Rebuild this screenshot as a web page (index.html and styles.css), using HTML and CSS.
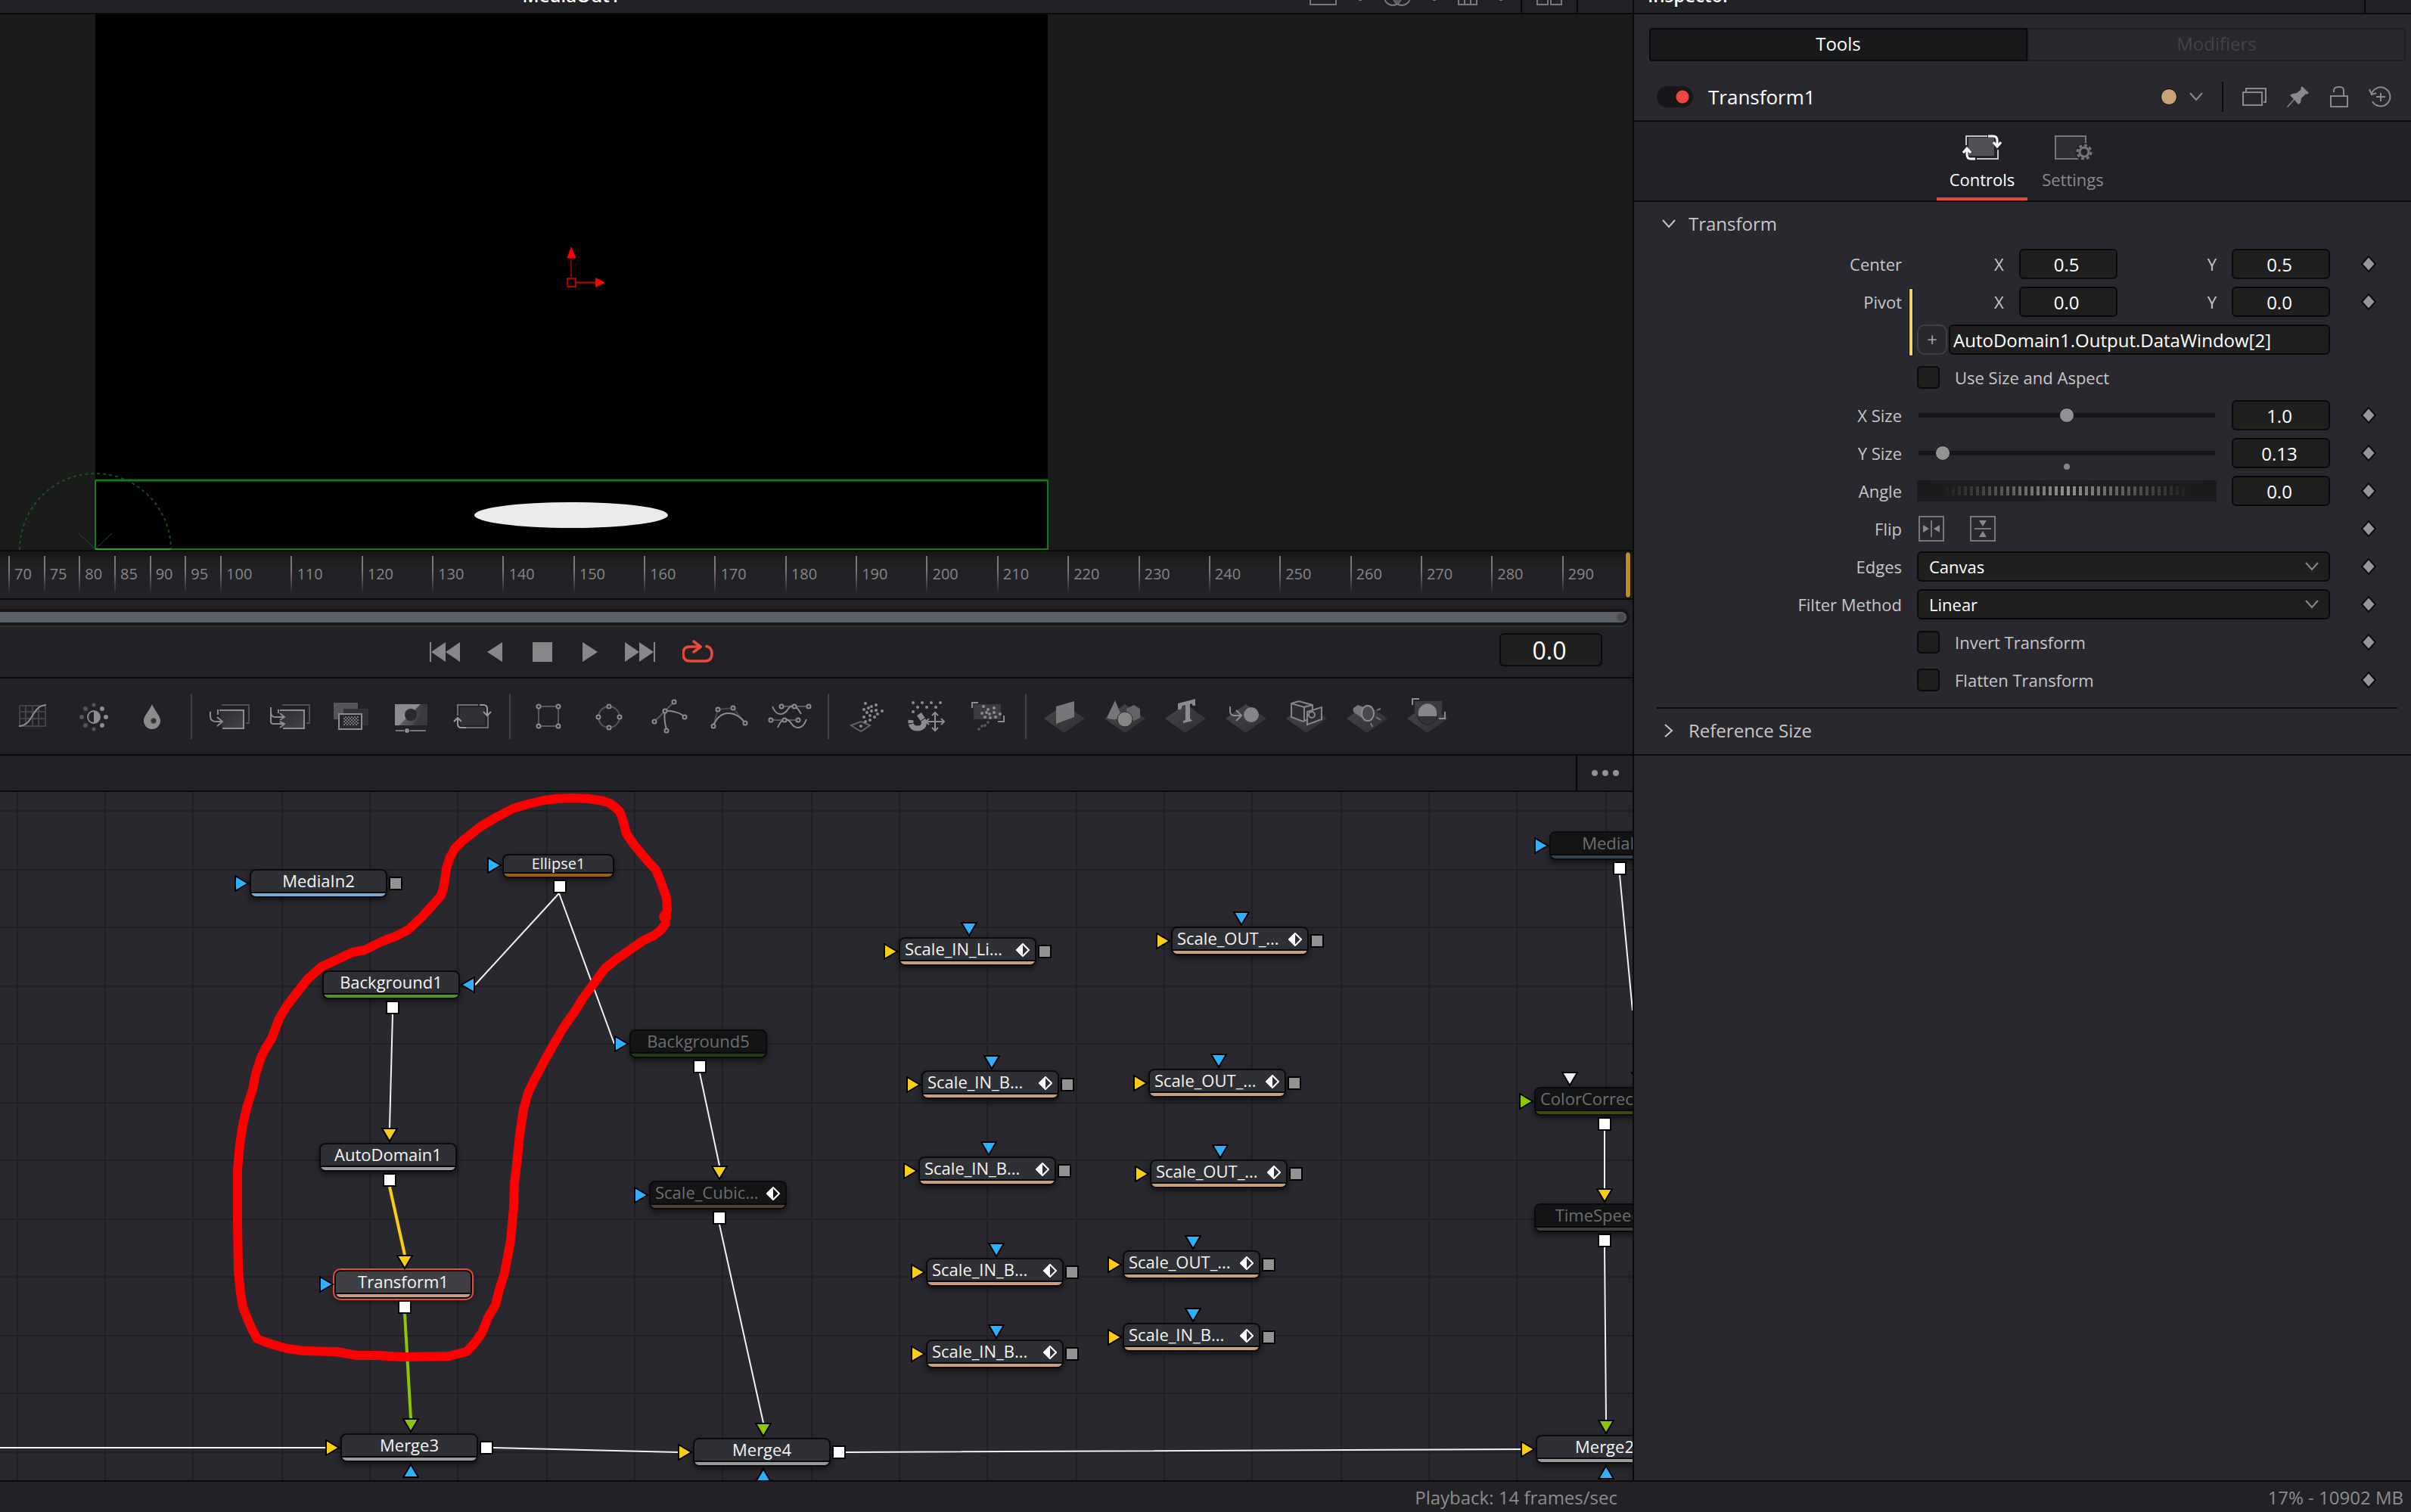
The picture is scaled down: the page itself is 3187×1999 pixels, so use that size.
FILE: index.html
```
<!DOCTYPE html>
<html lang="en">
<head>
<meta charset="utf-8">
<title>Fusion – MediaOut1</title>
<link rel="stylesheet" href="styles.css">
</head>
<body>
<svg class="sprite" aria-hidden="true">
  <defs>
    <symbol id="tri-r" viewBox="0 0 20 22"><path d="M1 1L18 11L1 21Z"/></symbol>
    <symbol id="tri-l" viewBox="0 0 20 22"><path d="M19 1L2 11L19 21Z"/></symbol>
    <symbol id="tri-d" viewBox="0 0 22 20"><path d="M1 1H21L11 18Z"/></symbol>
    <symbol id="tri-u" viewBox="0 0 22 20"><path d="M1 19H21L11 2Z"/></symbol>
    <symbol id="keyed" viewBox="0 0 18 18"><path d="M9 1L17 9L9 17L1 9Z" fill="none" stroke="#fff" stroke-width="2"/><path d="M9 0V18L0 9Z" fill="#fff"/></symbol>
    <symbol id="key" viewBox="0 0 22 24"><path d="M11 2L20 12L11 22L2 12Z" fill="#97979b" stroke="#0c0c0d" stroke-width="2"/></symbol>
    <symbol id="chev" viewBox="0 0 20 14"><path d="M2 2L10 11L18 2" fill="none" stroke="currentColor" stroke-width="2"/></symbol>
    <linearGradient id="base" x1="0" y1="0" x2="1" y2="1"><stop offset="0" stop-color="#48484b"/><stop offset="1" stop-color="#2e2e32"/></linearGradient>
    <linearGradient id="shade" x1="0" y1="0" x2="1" y2="1"><stop offset="0" stop-color="#2c2c30"/><stop offset="1" stop-color="#444448"/></linearGradient>
    <linearGradient id="matte" x1="0" y1="0" x2="1" y2="0"><stop offset="0" stop-color="#8a8a8a"/><stop offset="1" stop-color="#2c2c30"/></linearGradient>
    <pattern id="check" width="4" height="4" patternUnits="userSpaceOnUse"><path d="M0 0h2v2h-2zM2 2h2v2h-2z" fill="#777"/></pattern>
    <path id="floor" d="M3 33L30 14L57 33L30 52Z" fill="url(#base)"/>
  </defs>
</svg>

<div class="app">
  <div class="workspace">
    <main class="stage">
      <header class="bar viewer-bar">
        <h1 class="viewer-title">MediaOut1</h1>
        <div class="viewer-tools">
          <button class="bare" aria-label="Display options"><svg width="36" height="26" viewBox="0 0 36 26" fill="none" stroke="#77777a" stroke-width="2"><rect x="1" y="1" width="34" height="24"/><path d="M12 17h19" stroke-dasharray="2 2"/></svg></button>
          <i class="caret"></i>
          <button class="bare" aria-label="Colour channels"><svg width="36" height="34" viewBox="0 0 36 34" fill="none" stroke="#77777a" stroke-width="2"><circle cx="18" cy="9" r="10"/><circle cx="12" cy="19" r="11"/><circle cx="24" cy="19" r="11"/><path d="M18 10a11 11 0 0 1 0 18a11 11 0 0 1 0-18" fill="#555" stroke="none"/></svg></button>
          <i class="caret"></i>
          <button class="bare" aria-label="Grid"><svg width="26" height="26" viewBox="0 0 26 26" fill="none" stroke="#77777a" stroke-width="2"><path d="M1 1h24v24h-24zM9 1v24M17 1v24M1 9h24M1 17h24"/></svg></button>
          <i class="caret"></i>
        </div>
        <button class="bare split-view" aria-label="Split view"><svg width="34" height="26" viewBox="0 0 34 26" fill="none" stroke="#77777a" stroke-width="2"><path d="M1 1h14v24h-14zM19 1h14v24h-14z"/></svg></button>
        <span class="bar-end"></span>
      </header>

      <section class="viewer" aria-label="Viewer">
        <svg class="viewer-picture" viewBox="0 0 2158 708" preserveAspectRatio="xMinYMax meet">
          <rect x="126" y="0" width="1259" height="708" fill="#000"/>
          <ellipse cx="755" cy="662" rx="128" ry="17" fill="#ebebeb"/>
          <g fill="none" stroke="#137a17" stroke-width="2">
            <path d="M126 616H1385" stroke-width="3"/><path d="M126 616V707H1385V616"/>
            <path d="M26 708A100 101 0 0 1 226 708" stroke="#14661a" stroke-width="2" stroke-dasharray="4 4" opacity=".8"/>
            <path d="M104 686L126 707L148 686" stroke="#12601a" stroke-width="1"/>
            <path d="M126 707H226" stroke="#20a51f"/>
          </g>
          <path d="M755 348V322M750 322H761L755 308Z" fill="#f00" stroke="#f00" stroke-width="1"/>
          <path d="M762 354.500H788" stroke="#c80000" stroke-width="2"/>
          <path d="M787 348V361L800 354.500Z" fill="#f00"/>
          <rect x="750" y="349" width="11" height="11" fill="none" stroke="#e00000" stroke-width="1.500"/>
        </svg>
      </section>

      <div class="ruler" aria-label="Timeline">
        <span class="tick">70</span><span class="tick">75</span><span class="tick">80</span><span class="tick">85</span><span class="tick">90</span><span class="tick">95</span>
        <span class="tick wide">100</span><span class="tick wide">110</span><span class="tick wide">120</span><span class="tick wide">130</span><span class="tick wide">140</span><span class="tick wide">150</span><span class="tick wide">160</span><span class="tick wide">170</span><span class="tick wide">180</span><span class="tick wide">190</span><span class="tick wide">200</span><span class="tick wide">210</span><span class="tick wide">220</span><span class="tick wide">230</span><span class="tick wide">240</span><span class="tick wide">250</span><span class="tick wide">260</span><span class="tick wide">270</span><span class="tick wide">280</span><span class="tick wide">290</span>
        <i class="out-point"></i>
      </div>

      <div class="scroll"><div class="scroll-track"><div class="scroll-thumb"></div></div></div>

      <div class="transport">
        <div class="transport-keys">
          <button class="bare" aria-label="First frame"><svg width="40" height="26" viewBox="0 0 40 26" fill="#87878a"><path d="M0 0h2v26h-2zM2 13L21 0V26ZM21 13L40 0V26Z"/></svg></button>
          <button class="bare" aria-label="Play reverse"><svg width="20" height="26" viewBox="0 0 20 26" fill="#87878a"><path d="M0 13L20 0V26Z"/></svg></button>
          <button class="bare" aria-label="Stop"><svg width="26" height="26" viewBox="0 0 26 26" fill="#87878a"><path d="M0 0h26v26h-26z"/></svg></button>
          <button class="bare" aria-label="Play"><svg width="20" height="26" viewBox="0 0 20 26" fill="#87878a"><path d="M20 13L0 0V26Z"/></svg></button>
          <button class="bare" aria-label="Last frame"><svg width="40" height="26" viewBox="0 0 40 26" fill="#87878a"><path d="M38 0h2v26h-2zM38 13L19 0V26ZM19 13L0 0V26Z"/></svg></button>
          <button class="bare" aria-label="Loop"><svg width="44" height="34" viewBox="2 0 44 34" fill="none" stroke="#e8493a" stroke-width="3.500" stroke-linejoin="round" stroke-linecap="round"><path d="M26 10H12Q3 10 3 19Q3 29 12 29H32Q41 29 41 19Q41 11 34 9.500"/><path d="M17 3L26 10L17 17"/></svg></button>
        </div>
        <input class="field time" type="text" value="0.0" aria-label="Current time">
      </div>

      <div class="toolbar" role="toolbar" aria-label="Tools">
        <button class="tool" aria-label="Color curves"><svg viewBox="0 0 60 60" fill="none"><path d="M13 16H47V43H13ZM21 16V43M30 16V43M38 16V43M13 24H47M13 33H47" stroke="#434347" stroke-width="2"/><path d="M12 43C32 42 28 16 48 15" stroke="#8c8c8e" stroke-width="2"/></svg></button>
        <button class="tool" aria-label="Brightness contrast"><svg viewBox="0 0 60 60"><circle cx="31" cy="31" r="8" fill="none" stroke="#8c8c8e" stroke-width="2"/><path d="M31 23A8 8 0 0 1 31 39Z" fill="#8c8c8e"/><g fill="#555558"><circle cx="15" cy="31" r="3"/><circle cx="20" cy="20" r="3"/><circle cx="20" cy="42" r="3"/><circle cx="31" cy="15" r="2.500"/><circle cx="31" cy="47" r="2.500"/></g><g fill="#8c8c8e"><circle cx="47" cy="31" r="3"/><circle cx="42" cy="20" r="3"/><circle cx="42" cy="42" r="3"/></g></svg></button>
        <button class="tool" aria-label="Blur"><svg viewBox="0 0 60 60"><path d="M28 14C31 22 39 29 39 36A11 11 0 0 1 17 36C17 29 25 22 28 14Z" fill="#8c8c8e"/><circle cx="30" cy="36" r="3.500" fill="#333337" stroke="#555" stroke-width="1"/></svg></button>
        <i class="sep"></i>
        <button class="tool" aria-label="Media in"><svg viewBox="0 0 60 60" fill="none" stroke-width="2"><path d="M19 15H55V39H51" stroke="#515154"/><path d="M16 22H48V46H20" fill="url(#shade)" stroke="#8c8c8e"/><path d="M14 21V28M4 24V30Q4 37 12 37H20M13 31L20 37L13 43" stroke="#8c8c8e"/></svg></button>
        <button class="tool" aria-label="Merge"><svg viewBox="0 0 60 60" fill="none" stroke-width="2"><path d="M19 15H55V39H51" stroke="#515154"/><path d="M16 22H48V46H20" fill="url(#shade)" stroke="#8c8c8e"/><path d="M14 21V26M4 18V37Q4 40 8 40H22M4 24Q4 31 10 31H22M16 26L22 31L16 35M16 37L22 40L16 45" stroke="#8c8c8e"/></svg></button>
        <button class="tool" aria-label="Channel booleans"><svg viewBox="0 0 60 60"><path d="M7 12H39V34H7Z" fill="#565659"/><path d="M20 20H53V42H20Z" fill="#323236"/><path d="M14 27H44V47H14Z" fill="#28282c" stroke="#8c8c8e" stroke-width="2"/><path d="M20 30H40V42H20Z" fill="url(#check)"/></svg></button>
        <button class="tool" aria-label="Matte control"><svg viewBox="0 0 60 60"><path d="M8 14H51V42H8Z" fill="#3a3a3d"/><path d="M8 14H42L14 42H8Z" fill="#8c8c8e"/><path d="M42 14L14 42H32L51 14Z" fill="url(#matte)" opacity=".5"/><circle cx="29" cy="28" r="8" fill="#2a2a2e"/><path d="M9 49H20M28 49H49" stroke="#77777a" stroke-width="2"/><circle cx="24" cy="49" r="3" fill="#8c8c8e"/></svg></button>
        <button class="tool" aria-label="Transform"><svg viewBox="0 0 60 60" fill="none" stroke-width="2"><path d="M11 29V15H38M20 45H51V28" stroke="#6c6c6f"/><path d="M14 18H47V42H14Z" fill="#303035"/><path d="M40 15H45Q50 15 50 20V28M45 24L50 29L55 24M22 45H16Q11 45 11 40V33M6 37L11 32L16 37" stroke="#9a9a9c"/></svg></button>
        <i class="sep"></i>
        <button class="tool" aria-label="Rectangle mask"><svg viewBox="0 0 60 60" fill="#222226" stroke="#8c8c8e" stroke-width="2"><path d="M17 17H43V43H17Z" stroke="#58585b"/><circle cx="17" cy="17" r="2.500"/><circle cx="43" cy="17" r="2.500"/><circle cx="17" cy="43" r="2.500"/><circle cx="43" cy="43" r="2.500"/></svg></button>
        <button class="tool" aria-label="Ellipse mask"><svg viewBox="0 0 60 60" fill="#222226" stroke="#8c8c8e" stroke-width="2"><circle cx="30" cy="31" r="14" stroke="#58585b"/><circle cx="30" cy="17" r="2.500"/><circle cx="30" cy="45" r="2.500"/><circle cx="16" cy="31" r="2.500"/><circle cx="44" cy="31" r="2.500"/></svg></button>
        <button class="tool" aria-label="Polygon mask"><svg viewBox="0 0 60 60" fill="none" stroke="#8c8c8e" stroke-width="2"><path d="M10 37L36 11" stroke="#58585b"/><path d="M26 47C23 38 23 30 24 23C34 22 45 26 49 30"/><g fill="#222226"><circle cx="10" cy="37" r="2.500"/><circle cx="24" cy="23" r="2.500"/><circle cx="36" cy="11" r="2.500"/><circle cx="50" cy="31" r="2.500"/><circle cx="26" cy="49" r="2.500"/></g></svg></button>
        <button class="tool" aria-label="B-Spline mask"><svg viewBox="0 0 60 60" fill="none" stroke="#8c8c8e" stroke-width="2"><path d="M8 43L14 21L34 19L50 39" stroke="#48484b"/><path d="M8 43C16 20 38 22 50 39"/><g fill="#222226"><circle cx="8" cy="43" r="2.500"/><circle cx="14" cy="21" r="2.500"/><circle cx="34" cy="19" r="2.500"/><circle cx="50" cy="39" r="2.500"/></g></svg></button>
        <button class="tool" aria-label="Grid warp"><svg viewBox="0 0 60 60" fill="none" stroke="#8c8c8e" stroke-width="2"><path d="M18 17H54M4 35H40" stroke="#58585b"/><path d="M6 17C12 32 22 28 27 20Q35 10 44 27M13 45C18 32 25 32 30 38C36 48 46 48 51 34"/><g fill="#222226"><circle cx="18" cy="17" r="2.500"/><circle cx="35" cy="17" r="2.500"/><circle cx="54" cy="17" r="2.500"/><circle cx="4" cy="35" r="2.500"/><circle cx="22" cy="35" r="2.500"/><circle cx="40" cy="35" r="2.500"/></g></svg></button>
        <i class="sep"></i>
        <button class="tool" aria-label="Particle emitter"><svg viewBox="0 0 60 60"><path d="M9 42L22 37L34 42L22 50Z" fill="none" stroke="#636366" stroke-width="2"/><g fill="#8c8c8e"><circle cx="28" cy="13" r="2"/><circle cx="42" cy="15" r="2"/><circle cx="36" cy="17" r="2"/><circle cx="32" cy="19" r="2"/><circle cx="26" cy="21" r="2"/><circle cx="36" cy="23" r="2"/><circle cx="42" cy="22" r="2"/><circle cx="50" cy="23" r="2"/><circle cx="30" cy="25" r="2"/><circle cx="44" cy="27" r="2"/><circle cx="26" cy="31" r="2"/><circle cx="34" cy="29" r="2"/><circle cx="40" cy="31" r="2"/><circle cx="34" cy="35" r="2"/><circle cx="28" cy="37" r="2"/><circle cx="22" cy="43" r="2"/></g></svg></button>
        <button class="tool" aria-label="Particle force"><svg viewBox="0 0 60 60"><path d="M8 35Q7 45 16 46Q27 46 25 36L19 27" fill="none" stroke="#8c8c8e" stroke-width="7" stroke-dasharray="4 1 28 1 10"/><path d="M40 25V49M28 37H52M36 29L40 25L44 29M36 45L40 49L44 45M32 33L28 37L32 41M48 33L52 37L48 41" fill="none" stroke="#8c8c8e" stroke-width="2"/><g fill="#8c8c8e"><circle cx="11" cy="12" r="2"/><circle cx="23" cy="12" r="2"/><circle cx="35" cy="12" r="2"/><circle cx="47" cy="12" r="2"/><circle cx="17" cy="18" r="2"/><circle cx="29" cy="18" r="2"/><circle cx="41" cy="18" r="2"/><circle cx="11" cy="24" r="2"/></g></svg></button>
        <button class="tool" aria-label="Particle render"><svg viewBox="0 0 60 60"><path d="M11 14H47V34H11Z" fill="#3c3c40"/><path d="M9 19V12H17M43 37H51V29" fill="none" stroke="#8c8c8e" stroke-width="2"/><g fill="#8c8c8e"><circle cx="24" cy="17" r="2"/><circle cx="38" cy="19" r="2"/><circle cx="30" cy="21" r="2"/><circle cx="38" cy="25" r="2"/><circle cx="22" cy="26" r="2"/><circle cx="28" cy="25" r="2"/><circle cx="32" cy="27" r="2"/><circle cx="46" cy="27" r="2"/><circle cx="26" cy="31" r="2"/><circle cx="33" cy="32" r="2"/><circle cx="40" cy="31" r="2"/></g><g fill="#565659"><circle cx="30" cy="38" r="2"/><circle cx="26" cy="42" r="2"/><circle cx="22" cy="43" r="2"/><circle cx="18" cy="47" r="2"/></g></svg></button>
        <i class="sep"></i>
        <button class="tool" aria-label="Image plane 3D"><svg viewBox="0 0 60 60"><use href="#floor"/><path d="M19 17L43 10V31L19 40Z" fill="#77777a"/></svg></button>
        <button class="tool" aria-label="Shape 3D"><svg viewBox="0 0 60 60"><use href="#floor"/><path d="M17 9L26 31Q16 37 6 32Z" fill="#77777a"/><path d="M32 20L42 15L50 20V32L42 36L32 31Z" fill="#646467"/><circle cx="30" cy="34" r="10" fill="#858588" stroke="#2a2a2d"/></svg></button>
        <button class="tool" aria-label="Text 3D"><svg viewBox="0 0 60 60"><use href="#floor"/><path d="M20 13L43 7V16H40L38 13L36 14V33L39 36L27 39V36L30 35V15L26 16L24 21H20Z" fill="#8c8c8e"/></svg></button>
        <button class="tool" aria-label="Merge 3D"><svg viewBox="0 0 60 60"><use href="#floor"/><path d="M9 17V23Q9 29 15 29H24M17 22L24 29L17 36" fill="none" stroke="#8c8c8e" stroke-width="2"/><circle cx="37" cy="28" r="10" fill="#858588"/></svg></button>
        <button class="tool" aria-label="Camera 3D"><svg viewBox="0 0 60 60"><use href="#floor"/><g fill="#2d2d31" stroke="#858588" stroke-width="2"><path d="M10 13L20 10L38 15V30L26 37L10 31ZM10 13L27 18L38 15M27 18V37"/><path d="M31 24L50 18V34L31 41Z"/><circle cx="37" cy="28" r="4"/></g></svg></button>
        <button class="tool" aria-label="Spot light"><svg viewBox="0 0 60 60"><use href="#floor"/><path d="M12 19L18 15L26 18V34L16 27Q10 25 12 19Z" fill="#77777a"/><ellipse cx="31" cy="26" rx="8" ry="10" fill="#48484c" stroke="#8c8c8e" stroke-width="2"/><path d="M43 22L48 20M42 31L48 35M35 39L37 44" stroke="#77777a" stroke-width="2"/></svg></button>
        <button class="tool" aria-label="Renderer 3D"><svg viewBox="0 0 60 60"><use href="#floor"/><path d="M13 10H49V34H13Z" fill="#3c3c40"/><path d="M10 15V7H19M45 33H53V24" fill="none" stroke="#8c8c8e" stroke-width="2"/><circle cx="30" cy="28" r="13" fill="#333337" stroke="#232326"/><path d="M18 30A12.500 13 0 1 1 42 30Z" fill="#858588"/></svg></button>
      </div>

      <header class="bar nodes-bar"><button class="bare more" aria-label="Options"><i></i><i></i><i></i></button></header>

      <section class="canvas" aria-label="Nodes">
        <svg class="wires"><g transform="translate(0 -1047)" fill="none" stroke="#f2f2f2" stroke-width="2">
          <path d="M739 1181L628 1302M739 1181L812 1380M519 1341L515 1491M925 1419L951 1541M951 1619L1009 1881"/>
          <path d="M0 1914H430M652 1914L896 1920M1118 1920L2010 1916M2141 1157L2158 1336M2121 1495V1571M2121 1649L2123 1877"/>
          <path d="M515 1569L535 1659" stroke="#f9cc16" stroke-width="4"/>
          <path d="M535 1737L543 1875" stroke="#8bc700" stroke-width="4"/>
        </g></svg>

        <div class="node media" style="left:330px;top:102px"><span>MediaIn2</span><svg class="port left blue"><use href="#tri-r"/></svg><i class="sock right idle"></i></div>
        <div class="node small mask" style="left:664px;top:82px"><span>Ellipse1</span><svg class="port left blue"><use href="#tri-r"/></svg><i class="sock below"></i></div>
        <div class="node source" style="left:426px;top:236px"><span>Background1</span><svg class="port right blue"><use href="#tri-l"/></svg><i class="sock below"></i></div>
        <div class="node source off" style="left:832px;top:314px"><span>Background5</span><svg class="port left blue"><use href="#tri-r"/></svg><i class="sock below"></i></div>
        <div class="node plain" style="left:422px;top:464px"><span>AutoDomain1</span><svg class="port above gold"><use href="#tri-d"/></svg><i class="sock below"></i></div>
        <div class="node warp selected" style="left:442px;top:632px"><span>Transform1</span><svg class="port left blue"><use href="#tri-r"/></svg><svg class="port above gold"><use href="#tri-d"/></svg><i class="sock below"></i></div>
        <div class="node plain" style="left:450px;top:848px"><span>Merge3</span><svg class="port left gold"><use href="#tri-r"/></svg><svg class="port above green"><use href="#tri-d"/></svg><svg class="port under blue"><use href="#tri-u"/></svg><i class="sock right"></i></div>
        <div class="node plain" style="left:916px;top:854px"><span>Merge4</span><svg class="port left gold"><use href="#tri-r"/></svg><svg class="port above green"><use href="#tri-d"/></svg><svg class="port under blue"><use href="#tri-u"/></svg><i class="sock right"></i></div>
        <div class="node warp off keyed" style="left:858px;top:514px"><span>Scale_Cubic...</span><svg class="mark"><use href="#keyed"/></svg><svg class="port left blue"><use href="#tri-r"/></svg><svg class="port above gold"><use href="#tri-d"/></svg><i class="sock below"></i></div>

        <div class="node warp keyed" style="left:1188px;top:192px"><span>Scale_IN_Li...</span><svg class="mark"><use href="#keyed"/></svg><svg class="port left gold"><use href="#tri-r"/></svg><svg class="port above blue"><use href="#tri-d"/></svg><i class="sock right idle"></i></div>
        <div class="node warp keyed" style="left:1218px;top:368px"><span>Scale_IN_B...</span><svg class="mark"><use href="#keyed"/></svg><svg class="port left gold"><use href="#tri-r"/></svg><svg class="port above blue"><use href="#tri-d"/></svg><i class="sock right idle"></i></div>
        <div class="node warp keyed" style="left:1214px;top:482px"><span>Scale_IN_B...</span><svg class="mark"><use href="#keyed"/></svg><svg class="port left gold"><use href="#tri-r"/></svg><svg class="port above blue"><use href="#tri-d"/></svg><i class="sock right idle"></i></div>
        <div class="node warp keyed" style="left:1224px;top:616px"><span>Scale_IN_B...</span><svg class="mark"><use href="#keyed"/></svg><svg class="port left gold"><use href="#tri-r"/></svg><svg class="port above blue"><use href="#tri-d"/></svg><i class="sock right idle"></i></div>
        <div class="node warp keyed" style="left:1224px;top:724px"><span>Scale_IN_B...</span><svg class="mark"><use href="#keyed"/></svg><svg class="port left gold"><use href="#tri-r"/></svg><svg class="port above blue"><use href="#tri-d"/></svg><i class="sock right idle"></i></div>
        <div class="node warp keyed" style="left:1548px;top:178px"><span>Scale_OUT_...</span><svg class="mark"><use href="#keyed"/></svg><svg class="port left gold"><use href="#tri-r"/></svg><svg class="port above blue"><use href="#tri-d"/></svg><i class="sock right idle"></i></div>
        <div class="node warp keyed" style="left:1518px;top:366px"><span>Scale_OUT_...</span><svg class="mark"><use href="#keyed"/></svg><svg class="port left gold"><use href="#tri-r"/></svg><svg class="port above blue"><use href="#tri-d"/></svg><i class="sock right idle"></i></div>
        <div class="node warp keyed" style="left:1520px;top:486px"><span>Scale_OUT_...</span><svg class="mark"><use href="#keyed"/></svg><svg class="port left gold"><use href="#tri-r"/></svg><svg class="port above blue"><use href="#tri-d"/></svg><i class="sock right idle"></i></div>
        <div class="node warp keyed" style="left:1484px;top:606px"><span>Scale_OUT_...</span><svg class="mark"><use href="#keyed"/></svg><svg class="port left gold"><use href="#tri-r"/></svg><svg class="port above blue"><use href="#tri-d"/></svg><i class="sock right idle"></i></div>
        <div class="node warp keyed" style="left:1484px;top:702px"><span>Scale_IN_B...</span><svg class="mark"><use href="#keyed"/></svg><svg class="port left gold"><use href="#tri-r"/></svg><svg class="port above blue"><use href="#tri-d"/></svg><i class="sock right idle"></i></div>

        <div class="node media off" style="left:2048px;top:52px"><span>MediaIn1</span><svg class="port left blue"><use href="#tri-r"/></svg><i class="sock below"></i></div>
        <div class="node color off keyed" style="left:2028px;top:390px"><span>ColorCorrec...</span><svg class="port left green"><use href="#tri-r"/></svg><svg class="port above first pale"><use href="#tri-d"/></svg><svg class="port above second pale"><use href="#tri-d"/></svg><i class="sock below"></i></div>
        <div class="node plain off" style="left:2028px;top:544px"><span>TimeSpeed1</span><svg class="port above gold"><use href="#tri-d"/></svg><i class="sock below"></i></div>
        <div class="node plain" style="left:2030px;top:850px"><span>Merge2</span><svg class="port left gold"><use href="#tri-r"/></svg><svg class="port above green"><use href="#tri-d"/></svg><svg class="port under blue"><use href="#tri-u"/></svg></div>

        <svg class="wires"><g transform="translate(0 -1047)">
          <path fill="none" stroke="#f00" stroke-width="12" stroke-linejoin="round" stroke-linecap="round" d="M879 1212L882 1203L881 1187L874 1167L867 1150L855 1137L839 1118L828 1102L825 1090L822 1080L819 1073L813 1067L806 1062L798 1059L778 1056L754 1055L736 1056L719 1058L698 1063L678 1069L655 1081L635 1093L621 1104L611 1112L601 1122L595 1133L590 1148L588 1163L586 1175L583 1184L576 1192L558 1212L540 1229L525 1237L504 1245L482 1256L466 1259L445 1269L425 1278L407 1294L392 1313L379 1330L369 1347L359 1373L351 1386L345 1398L338 1420L334 1440L326 1465L321 1487L317 1513L314 1547L314 1613L315 1680L318 1710L321 1728L327 1743L333 1757L340 1770L350 1774L362 1778L380 1783L401 1786L444 1787L472 1792L500 1792L532 1794L593 1793L617 1787L628 1775L637 1762L642 1750L645 1742L655 1725L660 1705L667 1683L675 1640L679 1597L680 1565L684 1530L687 1500L692 1467L698 1445L706 1428L720 1402L734 1377L747 1355L760 1337L771 1319L783 1303L800 1280L815 1268L831 1257L851 1243L864 1237L873 1230L880 1221Z"/>
          <circle cx="879" cy="1212" r="8" fill="#f00"/>
        </g></svg>
      </section>
    </main>

    <aside class="inspector">
      <header class="bar"><h2 class="inspector-title">Inspector</h2></header>
      <div class="modes" role="tablist">
        <button class="mode on" role="tab" aria-selected="true">Tools</button><button class="mode" role="tab" disabled>Modifiers</button>
      </div>
      <div class="tool-head">
        <input class="switch" type="checkbox" id="enable" checked>
        <label class="tool-name" for="enable">Transform1</label>
        <i class="swatch"></i>
        <button class="bare tint" aria-label="Tile colour"><svg width="20" height="14"><use href="#chev"/></svg></button>
        <div class="head-icons">
          <button class="bare" aria-label="Versions"><svg width="32" height="24" viewBox="0 0 32 24" fill="none" stroke="#8a8a8c" stroke-width="2"><path d="M1 6H26V23H1ZM5 5V1H31V19H28"/></svg></button>
          <button class="bare" aria-label="Pin"><svg width="30" height="30" viewBox="0 0 30 30" fill="#8a8a8c"><path d="M20 1L29 10L26 12L25 11L19 17L18 23L15 25L10 19L1 29L0 28L9 18L4 13L7 11L13 10L19 5L18 4Z"/></svg></button>
          <button class="bare" aria-label="Lock"><svg width="24" height="28" viewBox="0 0 24 28" fill="none" stroke="#8a8a8c" stroke-width="2"><path d="M1 13H23V27H1ZM5 8V6Q5 1 11 1H13Q18 1 18 6V13"/></svg></button>
          <button class="bare" aria-label="Reset"><svg width="30" height="28" viewBox="0 0 30 28" fill="none" stroke="#8a8a8c" stroke-width="2"><path d="M4 10A12.500 12.500 0 1 1 5 20M1 4L4 11L10 9M16 9V20M10 14H22"/></svg></button>
        </div>
      </div>

      <div class="pages" role="tablist">
        <button class="page on" role="tab" aria-selected="true"><svg width="54" height="36" viewBox="0 0 54 36" fill="none" stroke-width="2"><path d="M9 5H43V29H9Z" fill="#515155"/><path d="M6 15V3H34M20 33H48V21" stroke="#c4c4c4"/><path d="M35 3H42Q47 3 47 9V15M42 11L47 17L52 11M18 33H12Q7 33 7 27V21M2 25L7 19L12 25" stroke="#fff" stroke-width="3"/></svg>Controls</button>
        <button class="page" role="tab"><svg width="54" height="36" viewBox="0 0 54 36" fill="none" stroke="#77777a" stroke-width="2"><path d="M35 33H4V3H44V14" fill="#2e2e33"/><circle cx="42" cy="24" r="7" stroke="#222226" stroke-width="10" fill="#222226"/><circle cx="42" cy="24" r="6" stroke-width="3"/><circle cx="42" cy="24" r="9" stroke-width="3" stroke-dasharray="4 3"/></svg>Settings</button>
      </div>

      <section class="group">
        <h3 class="group-title"><svg width="20" height="14"><use href="#chev"/></svg>Transform</h3>
        <div class="rows">
          <div class="row"><span class="label">Center</span><div class="value pair"><label for="cx">X</label><input class="field num" id="cx" type="text" value="0.5"><label for="cy">Y</label><input class="field num" id="cy" type="text" value="0.5"></div><button class="bare" aria-label="Keyframe"><svg class="key"><use href="#key"/></svg></button></div>
          <div class="row linked"><span class="label">Pivot</span><div class="value pair"><label for="px">X</label><input class="field num" id="px" type="text" value="0.0"><label for="py">Y</label><input class="field num" id="py" type="text" value="0.0"></div><button class="bare" aria-label="Keyframe"><svg class="key"><use href="#key"/></svg></button></div>
          <div class="row"><span class="label"></span><div class="value"><button class="plus" aria-label="Pick expression">+</button><input class="field expr" type="text" value="AutoDomain1.Output.DataWindow[2]" aria-label="Pivot expression"></div></div>
          <div class="row"><span class="label"></span><div class="value"><input class="check" id="usa" type="checkbox"><label for="usa">Use Size and Aspect</label></div></div>
          <div class="row"><label class="label" for="xs">X Size</label><div class="value"><input class="slider" id="xs" type="range" value="50"><input class="field num" type="text" value="1.0" aria-label="X Size value"></div><button class="bare" aria-label="Keyframe"><svg class="key"><use href="#key"/></svg></button></div>
          <div class="row"><label class="label" for="ys">Y Size</label><div class="value marked"><input class="slider" id="ys" type="range" value="6"><input class="field num" type="text" value="0.13" aria-label="Y Size value"></div><button class="bare" aria-label="Keyframe"><svg class="key"><use href="#key"/></svg></button></div>
          <div class="row"><label class="label" for="an">Angle</label><div class="value"><div class="wheel"></div><input class="field num" id="an" type="text" value="0.0"></div><button class="bare" aria-label="Keyframe"><svg class="key"><use href="#key"/></svg></button></div>
          <div class="row"><span class="label">Flip</span><div class="value flips">
            <button class="bare" aria-label="Flip horizontally"><svg width="34" height="34" viewBox="0 0 34 34" fill="none" stroke="#77777a" stroke-width="2"><path d="M1 1H33V33H1Z"/><path d="M17 6V28"/><path d="M6 12L14 17L6 22ZM28 12L20 17L28 22Z" fill="#8a8a8c" stroke="none"/></svg></button>
            <button class="bare" aria-label="Flip vertically"><svg width="34" height="34" viewBox="0 0 34 34" fill="none" stroke="#77777a" stroke-width="2"><path d="M1 1H33V33H1Z"/><path d="M6 17H28"/><path d="M12 6L17 14L22 6ZM12 28L17 20L22 28Z" fill="#8a8a8c" stroke="none"/></svg></button></div><button class="bare" aria-label="Keyframe"><svg class="key"><use href="#key"/></svg></button></div>
          <div class="row"><label class="label" for="ed">Edges</label><div class="value pick"><select class="field" id="ed"><option>Canvas</option></select><svg width="20" height="14"><use href="#chev"/></svg></div><button class="bare" aria-label="Keyframe"><svg class="key"><use href="#key"/></svg></button></div>
          <div class="row"><label class="label" for="fm">Filter Method</label><div class="value pick"><select class="field" id="fm"><option>Linear</option></select><svg width="20" height="14"><use href="#chev"/></svg></div><button class="bare" aria-label="Keyframe"><svg class="key"><use href="#key"/></svg></button></div>
          <div class="row"><span class="label"></span><div class="value"><input class="check" id="inv" type="checkbox"><label for="inv">Invert Transform</label></div><button class="bare" aria-label="Keyframe"><svg class="key"><use href="#key"/></svg></button></div>
          <div class="row"><span class="label"></span><div class="value"><input class="check" id="fla" type="checkbox"><label for="fla">Flatten Transform</label></div><button class="bare" aria-label="Keyframe"><svg class="key"><use href="#key"/></svg></button></div>
        </div>
      </section>
      <section class="group folded">
        <h3 class="group-title"><svg class="turned" width="20" height="14"><use href="#chev"/></svg>Reference Size</h3>
      </section>
    </aside>
  </div>

  <footer class="status"><span class="playback">Playback: 14 frames/sec</span><span class="memory">17% - 10902 MB</span></footer>
</div>
</body>
</html>
```
FILE: styles.css
```
:root {
  --panel: #28282e;
  --bar: #222226;
  --line: #0a0a0b;
  --field: #1f1f1f;
  --icon: #8a8a8c;
  --side: 1027px;
}
* { box-sizing: border-box; }
body {
  margin: 0;
  background: var(--panel);
  color: #c6c6c8;
  font: 22px/30px "Open Sans", sans-serif;
  overflow: hidden;
}
h1, h2, h3 { margin: 0; }
button, input, select { font: inherit; color: inherit; margin: 0; }
svg { display: block; flex: none; }
.sprite { position: absolute; width: 0; height: 0; }
.bare { display: flex; align-items: center; padding: 0; border: 0; background: none; }

.app { display: flex; flex-direction: column; height: calc(100vh + 29px); margin-top: -29px; }
.workspace { flex: 1; min-height: 0; display: grid; grid-template-columns: minmax(0, 1fr) calc(var(--side) + 2px); }
.stage { display: flex; flex-direction: column; min-width: 0; min-height: 0; }
.bar { display: flex; align-items: stretch; height: 48px; background: var(--bar); border-bottom: 2px solid var(--line); flex: none; }

/* viewer */
.viewer-bar { display: grid; grid-template-columns: 1510px 1fr auto auto auto; }
.viewer-title { align-self: center; text-align: center; font-size: 24px; font-weight: 600; color: #fff; }
.viewer-tools { grid-column: 3; display: flex; align-items: center; gap: 29px; padding-right: 24px; }
.caret { width: 4px; height: 14px; background: linear-gradient(transparent 12px, #77777a 12px); }
.split-view { padding: 0 19px; border: solid var(--line); border-width: 0 2px; }
.bar-end { width: 72px; }
.viewer { flex: 708 1 0; min-height: 0; background: #1b1b1b; }
.viewer-picture { width: 100%; height: 100%; }

/* timeline */
.ruler { position: relative; display: flex; height: 66px; padding-left: 11px; border: solid var(--line); border-width: 2px 0; background: linear-gradient(#17171a, var(--bar) 24px); flex: none; font-size: 20px; line-height: 60px; color: #858588; }
.tick { flex: 1 1 0; min-width: 0; text-indent: 8px; background: linear-gradient(#77777a, #77777a 40%, transparent) 0 6px / 2px 50px no-repeat; }
.tick.wide { flex-grow: 2; }
.out-point { position: absolute; right: 3px; top: 1px; width: 6px; height: 60px; background: #b98f24; border-radius: 3px; outline: 1px solid var(--line); }
.scroll { height: 36px; padding-top: 12px; background: var(--bar); flex: none; }
.scroll-track { height: 22px; margin-right: 4px; padding: 4px 4px 4px 0; background: #17171a; border-radius: 0 11px 11px 0; box-shadow: 0 2px #2d2d32; }
.scroll-thumb { height: 14px; background: radial-gradient(circle at calc(100% - 7px) 7px, #4a4b50 5px, #5a5e67 6px); border-radius: 0 7px 7px 0; }
.transport { display: flex; align-items: flex-start; justify-content: space-between; height: 68px; padding: 8px 40px 0 568px; background: var(--bar); border-bottom: 2px solid var(--line); flex: none; }
.transport-keys { display: flex; align-items: center; gap: 36px; height: 50px; }
.transport-keys button:nth-child(3) { margin: 0 4px; }

/* fields */
.field { height: 40px; padding: 0; background: var(--field); border: 2px solid var(--line); border-radius: 6px; color: #fff; font-size: 24px; min-width: 0; }
.time { width: 136px; height: 44px; padding-right: 4px; text-align: center; font-size: 32px; }
.num { width: 130px; padding-right: 4px; text-align: center; flex: none; }

/* toolbar */
.toolbar { display: flex; align-items: center; height: 102px; padding-left: 3px; background: var(--bar); border-bottom: 2px solid var(--line); flex: none; }
.tool { display: grid; place-items: center; width: 80px; height: 60px; padding: 0; border: 0; background: none; }
.tool svg { width: 60px; height: 60px; }
.sep { width: 2px; height: 60px; margin: 0 10px 0 9px; background: #414145; }

.nodes-bar { justify-content: flex-end; }
.more { justify-content: center; gap: 6px; width: 75px; border-left: 2px solid var(--line); }
.more i { width: 8px; height: 8px; border-radius: 50%; background: #929294; }

/* node canvas */
.canvas {
  --g: #202024;
  position: relative;
  flex: 910 1 0;
  min-height: 0;
  overflow: hidden;
  background:
    linear-gradient(90deg, var(--g) 2px, transparent 2px, transparent 116px, var(--g) 116px, var(--g) 118px, transparent 118px, transparent 232px, var(--g) 232px, var(--g) 234px, transparent 234px) 22px 0 / 350px 100%,
    linear-gradient(var(--g) 2px, transparent 2px, transparent 78px, var(--g) 78px, var(--g) 80px, transparent 80px) 0 24px / 100% 154px,
    var(--panel);
}
.wires { position: absolute; inset: 0; width: 100%; height: 100%; pointer-events: none; }
.node {
  position: absolute;
  width: 182px;
  height: 38px;
  border: 2px solid var(--line);
  border-radius: 8px;
  background: linear-gradient(#2e3035 28px, var(--line) 28px, var(--line) 30px, var(--strip) 30px);
  box-shadow: 0 4px 8px rgba(0, 0, 0, .5);
  color: #f4f4f4;
  text-align: center;
  line-height: 26px;
  white-space: nowrap;
}
.node.small { width: 148px; height: 32px; font-size: 20px; line-height: 22px; background: linear-gradient(#2e3035 22px, var(--line) 22px, var(--line) 24px, var(--strip) 24px); }
.node.keyed { text-align: left; padding-left: 6px; }
.node.off { color: #6e6e70; background: linear-gradient(#121416 28px, var(--line) 28px, var(--line) 30px, var(--strip) 30px); }
.node.selected { background: linear-gradient(#3e4045 28px, var(--line) 28px, var(--line) 30px, var(--strip) 30px); outline: 2px solid #e8493a; }
.media { --strip: #7ba7d0; }
.media.off { --strip: #32424f; }
.mask { --strip: #9a6200; }
.source { --strip: #5a931c; }
.source.off { --strip: #243c0d; }
.plain { --strip: #999; }
.plain.off { --strip: #3c3c3e; }
.warp { --strip: #c9a077; }
.warp.off { --strip: #523f2e; }
.color.off { --strip: #3f4c08; }
.mark { position: absolute; right: 7px; top: 6px; width: 18px; height: 18px; }
.port { position: absolute; width: 20px; height: 22px; stroke: #000; stroke-width: 2; }
.port.left { left: -22px; top: 6px; }
.port.right { right: -22px; top: 6px; }
.port.above, .port.under { width: 22px; height: 20px; left: calc(50% - 9px); }
.port.above { top: -22px; }
.port.under { top: 37px; }
.port.first { left: 34px; }
.port.second { left: 126px; }
.small .port.left { top: 2px; }
.blue { fill: #2bb1ff; }
.gold { fill: #f9cc16; }
.green { fill: #8bc700; }
.pale { fill: #eee; }
.sock { position: absolute; width: 18px; height: 18px; border: 2px solid #000; background: #fff; }
.sock.right { right: -22px; top: 8px; }
.sock.below { left: calc(50% - 7px); bottom: -22px; }
.sock.idle { background: #929292; }

/* inspector */
.inspector { display: flex; flex-direction: column; border-left: 2px solid var(--line); background: var(--panel); min-width: 0; }
.inspector-title { align-self: center; flex: 1; padding-left: 18px; font-size: 24px; font-weight: 600; color: #fff; }
.inspector .bar::after { content: ""; width: 60px; border-left: 2px solid var(--line); }
.modes { display: grid; grid-template-columns: 1fr 1fr; margin: 18px 7px 0 20px; height: 44px; }
.mode { padding: 0 0 2px; border: 2px solid #1f1f23; background: none; font-size: 24px; color: #434347; border-radius: 0 4px 4px 0; }
.mode.on { border-color: var(--line); background: #17191a; color: #fff; border-radius: 4px 0 0 4px; }
.tool-head { display: flex; align-items: center; height: 80px; padding: 16px 26px 0 30px; border-bottom: 2px solid var(--line); }
.switch { appearance: none; width: 48px; height: 28px; border-radius: 14px; background: radial-gradient(circle at 34px 14px, #e8493a 8px, #17171a 9px); }
.tool-name { flex: 1; padding-left: 20px; font-size: 26px; color: #fff; }
.swatch { width: 22px; height: 22px; border: 1px solid var(--line); border-radius: 50%; background: #c9a277; }
.tint { margin: 0 24px 0 15px; color: var(--icon); }
.head-icons { display: flex; align-items: center; gap: 27px; height: 40px; padding-left: 25px; border-left: 2px solid var(--line); }
.pages { display: flex; justify-content: center; height: 106px; padding-left: 13px; border-bottom: 2px solid var(--line); background: var(--bar); }
.page { display: flex; flex-direction: column; align-items: center; gap: 9px; width: 120px; padding: 16px 0 0; border: 0; background: none; color: var(--icon); }
.page.on { color: #fff; border-bottom: 4px solid #e8493a; }
.group-title { display: flex; align-items: center; gap: 16px; height: 58px; padding-left: 36px; font-size: 24px; font-weight: 400; }
.rows { display: grid; grid-auto-rows: 50px; }
.group .rows { margin-top: -1px; }
.row { display: grid; grid-template-columns: 354px minmax(0, 1fr) 102px; align-items: center; margin-right: 5px; }
.label { text-align: right; }
.row .value { display: flex; align-items: center; gap: 20px; padding-left: 20px; }
.row > .bare { justify-self: center; }
.key { width: 22px; height: 24px; }
.row .pair { justify-content: flex-end; }
.pair .num:nth-child(2) { margin-right: 99px; }
.row .value:has(.plus) { gap: 2px; }
.plus { width: 40px; height: 40px; padding: 0; border: 2px solid #3d4046; border-radius: 10px; background: none; color: #a4a4a6; font-size: 24px; line-height: 30px; }
.expr { flex: 1; padding-left: 4px; }
.linked { position: relative; }
.linked::after { content: ""; position: absolute; left: 363px; top: 7px; width: 4px; height: 88px; border: 1px solid var(--line); border-radius: 2px; background: #f1d46e; }
.check { appearance: none; width: 30px; height: 30px; border: 2px solid var(--line); border-radius: 5px; background: var(--field); }
.slider { appearance: none; flex: 1; min-width: 0; height: 18px; margin: 0 2px; background: linear-gradient(#17171a, #17171a) 0 6px / 100% 6px no-repeat; }
.slider::-webkit-slider-thumb { appearance: none; width: 20px; height: 20px; border: 1px solid #17171a; border-radius: 50%; background: #929294; }
.marked { position: relative; }
.marked::after { content: ""; position: absolute; left: 214px; top: 34px; width: 8px; height: 8px; border-radius: 50%; background: #858588; }
.wheel { position: relative; flex: 1; height: 28px; background: linear-gradient(90deg, #191b1c, #1f2021 50%, #191b1c); }
.wheel::after { content: ""; position: absolute; inset: 8px 14px; background: repeating-linear-gradient(90deg, #929294 0 4px, transparent 4px 8px); mask-image: linear-gradient(90deg, transparent 5%, #000 50%, transparent 95%); }
.row .flips { gap: 34px; padding-left: 22px; }
.pick { position: relative; }
.pick .field { appearance: none; flex: 1; padding: 0 14px; font-size: 22px; }
.pick svg { position: absolute; right: 14px; color: var(--icon); }
.folded { margin-top: 11px; height: 64px; border-bottom: 2px solid var(--line); }
.folded::before { content: ""; display: block; height: 2px; margin: 0 18px 0 30px; background: var(--line); }
.turned { transform: rotate(-90deg); }

/* status */
.status { display: flex; height: 42px; border-top: 2px solid var(--line); background: var(--bar); color: #8c8c8e; font-size: 24px; line-height: 42px; flex: none; }
.playback { flex: 1; text-align: right; padding-right: 20px; }
.memory { width: calc(var(--side) + 2px); text-align: right; padding-right: 10px; }
```
